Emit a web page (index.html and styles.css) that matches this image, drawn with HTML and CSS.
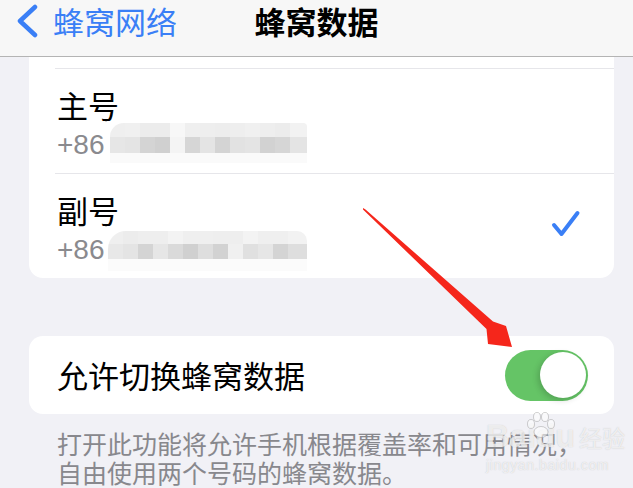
FILE: index.html
```html
<!DOCTYPE html>
<html lang="zh-CN">
<head>
    <meta charset="UTF-8">
    <meta name="viewport" content="width=device-width, initial-scale=1.0">
    <title>蜂窝数据</title>
    <link rel="stylesheet" href="styles.css">
</head>
<body>
    <header class="nav">
        <a class="nav-back">
            <svg width="24" height="34" viewBox="0 0 24 34">
                <path d="M20 3 L5 17 L20 31" fill="none" stroke="#3a7ff6" stroke-width="4.5" stroke-linecap="round" stroke-linejoin="round"/>
            </svg>
            <span>蜂窝网络</span>
        </a>
        <h1 class="nav-title">蜂窝数据</h1>
        <span></span>
    </header>

    <main class="content">
        <section class="group group-sims">
            <div class="cell">
                <div class="cell-text">
                    <div class="cell-title">主号</div>
                    <div class="cell-sub">+86<span class="mosaic mosaic-one"></span></div>
                </div>
            </div>
            <div class="cell">
                <div class="cell-text">
                    <div class="cell-title">副号</div>
                    <div class="cell-sub">+86<span class="mosaic mosaic-two"></span></div>
                </div>
                <svg class="check" width="30" height="30" viewBox="0 0 30 30">
                    <path d="M3 16 L10.5 25 L26.5 4" fill="none" stroke="#3a7ff6" stroke-width="4" stroke-linecap="round" stroke-linejoin="round"/>
                </svg>
            </div>
        </section>

        <section class="group group-switch">
            <span class="switch-label">允许切换蜂窝数据</span>
            <span class="toggle"><span class="knob"></span></span>
        </section>

        <p class="footnote">打开此功能将允许手机根据覆盖率和可用情况，<br>自由使用两个号码的蜂窝数据。</p>
    </main>

    <svg class="arrow" width="633" height="488" viewBox="0 0 633 488">
        <polygon points="363,208 365.5,209.5 493,321.5 506,326 512,347 488,344 486.5,329 363,209.5" fill="#f5261b"/>
    </svg>

    <div class="watermark">
        <svg class="wm-paw" width="30" height="26" viewBox="0 0 30 26">
            <g fill="rgba(255,255,255,0.55)" stroke="rgba(150,150,150,0.45)" stroke-width="1">
                <ellipse cx="5" cy="12" rx="3.5" ry="4.5"/>
                <ellipse cx="11" cy="5" rx="3.5" ry="4.5"/>
                <ellipse cx="19" cy="5" rx="3.5" ry="4.5"/>
                <ellipse cx="25" cy="12" rx="3.5" ry="4.5"/>
                <ellipse cx="15" cy="20" rx="7" ry="5.5"/>
            </g>
        </svg>
        <div class="wm-logo"><span class="wm-bai">Bai</span><span class="wm-du">du</span><span class="wm-cn">经验</span></div>
        <div class="wm-url">jingyan.baidu.com</div>
    </div>
</body>
</html>
```

FILE: styles.css
```css
html, body {
    margin: 0;
    width: 633px;
    height: 488px;
    overflow: hidden;
}

body {
    position: relative;
    background: #f1f1f6;
    font-family: "Noto Sans CJK SC", "Noto Sans", sans-serif;
    color: #000;
}

.nav {
    height: 56px;
    background: #f7f7f7;
    border-bottom: 1px solid #b4b4b4;
    display: grid;
    grid-template-columns: 1fr auto 1fr;
    align-items: start;
}

.nav-back {
    display: flex;
    align-items: center;
    height: 41px;
    padding-left: 15px;
    gap: 14px;
    color: #3a7ff6;
    font-size: 31px;
    line-height: 41px;
}

.nav-title {
    margin: 0;
    font-size: 31px;
    line-height: 41px;
    font-weight: 700;
}

.content {
    padding: 0 19px 0 29px;
}

.group {
    background: #fff;
    border-radius: 14px;
}

.group-sims {
    border-radius: 0 0 14px 14px;
    padding-top: 11px;
}

.cell {
    display: flex;
    align-items: center;
    margin-left: 26px;
    padding: 0 33px 0 2px;
    border-top: 1px solid #e6e6ea;
}

.cell-text {
    flex: 1;
    padding: 18px 0 11px;
}

.cell-title {
    font-size: 31px;
    line-height: 36px;
}

.cell-sub {
    display: flex;
    align-items: center;
    margin-top: 5px;
    height: 34px;
    font-family: "Liberation Sans", sans-serif;
    font-size: 28px;
    color: #8a8a8e;
}

.mosaic {
    display: block;
    height: 40px;
    margin-top: -4px;
    background:
        linear-gradient(to right, #efefef 0 15px, #f0f0f0 15px 30px, #ececec 30px 60px, #f7f7f7 60px 75px, #efefef 75px 90px, #eeeeee 90px 105px, #ededed 105px 120px, #eeeeee 120px 135px, #f0f0f0 135px 150px, #eeeeee 150px 165px, #ececec 165px 180px, #f2f2f2 180px) top / 100% 14px no-repeat,
        linear-gradient(to right, #e6e6e6 0 15px, #e4e4e4 15px 30px, #d4d4d4 30px 45px, #d0d0d0 45px 60px, #f4f4f4 60px 75px, #d6d6d6 75px 90px, #e4e4e4 90px 105px, #d4d4d4 105px 120px, #e2e2e2 120px 135px, #e4e4e4 135px 150px, #d2d2d2 150px 165px, #d6d6d6 165px 180px, #e4e4e4 180px) 0 14px / 100% 16px no-repeat,
        #fafafa;
}

.mosaic-one {
    width: 197px;
    margin-left: 5px;
    border-radius: 14px 4px 0 0;
}

.mosaic-two {
    width: 199px;
    margin-left: 3px;
    margin-top: 2px;
    border-radius: 18px 10px 0 0;
    background:
        linear-gradient(to right, #efefef 0 15px, #ececec 15px 30px, #eeeeee 30px 60px, #f3f3f3 60px 75px, #efefef 75px 105px, #eeeeee 105px 135px, #f3f3f3 135px 150px, #efefef 150px 180px, #f2f2f2 180px) top / 100% 13px no-repeat,
        linear-gradient(to right, #e8e8e8 0 15px, #e4e4e4 15px 30px, #d4d4d4 30px 45px, #e6e6e6 45px 60px, #dadada 60px 75px, #d0d0d0 75px 90px, #dedede 90px 105px, #d2d2d2 105px 120px, #f0f0f0 120px 135px, #e0e0e0 135px 150px, #e6e6e6 150px 165px, #d4d4d4 165px 180px, #dedede 180px) 0 13px / 100% 15px no-repeat,
        #fbfbfb;
}

.check {
    flex: none;
    margin-top: -4px;
}

.group-switch {
    margin-top: 58px;
    height: 78px;
    display: flex;
    align-items: center;
    justify-content: space-between;
    padding: 0 26px 0 28px;
}

.switch-label {
    font-size: 31px;
    line-height: 36px;
}

.toggle {
    position: relative;
    width: 83px;
    height: 51px;
    border-radius: 26px;
    background: #65c466;
}

.toggle .knob {
    position: absolute;
    top: 2.5px;
    right: 2.5px;
    width: 46px;
    height: 46px;
    border-radius: 50%;
    background: #fff;
    box-shadow: -2px 2px 6px rgba(0, 0, 0, 0.18);
}

.footnote {
    margin: 15px 0 0;
    padding-left: 28px;
    font-size: 25px;
    line-height: 29px;
    color: #88888d;
}

.arrow {
    position: absolute;
    left: 0;
    top: 0;
}

.watermark {
    position: absolute;
    left: 486px;
    top: 416px;
    color: rgba(255, 255, 255, 0.7);
    text-shadow: 0 0 1px rgba(150, 150, 150, 0.5);
    font-family: "Liberation Sans", sans-serif;
}

.wm-paw {
    position: absolute;
    left: 40px;
    top: -4px;
}

.wm-logo {
    font-size: 32px;
    font-weight: 700;
    line-height: 40px;
    white-space: nowrap;
}

.wm-cn {
    font-family: "Noto Sans CJK SC", sans-serif;
    font-size: 23px;
    font-weight: 400;
    margin-left: 4px;
}

.wm-url {
    font-size: 14px;
    line-height: 16px;
    letter-spacing: 0.6px;
}
```
